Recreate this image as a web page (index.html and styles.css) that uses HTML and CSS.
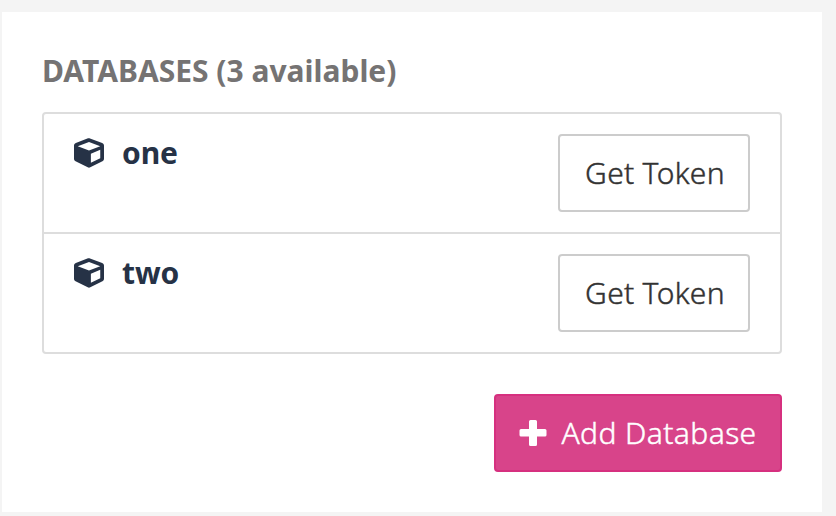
FILE: index.html
```html
<!DOCTYPE html>
<html lang="en">
<head>
<meta charset="utf-8">
<title>Databases</title>
<link rel="stylesheet" href="styles.css">
</head>
<body>
<main class="panel">
  <h2 class="title">DATABASES (3 available)</h2>
  <ul class="list">
    <li class="row">
      <svg class="cube" viewBox="0 0 512 512"><path d="M239.1 6.300l-208 78c-18.700 7-31.100 25-31.100 45v225.100c0 18.200 10.300 34.800 26.500 42.900l208 104c13.500 6.800 29.400 6.800 42.900 0l208-104c16.300-8.100 26.500-24.800 26.500-42.900V129.300c0-20-12.400-37.900-31.100-44.900l-208-78C262 2.200 250 2.200 239.100 6.300zM256 68.400l192 72v1.100l-192 70-192-70v-1.100l192-72zm32 356V267l160-65v142.400l-160 80z"/></svg>
      <span class="name">one</span>
      <button class="btn">Get Token</button>
    </li>
    <li class="row">
      <svg class="cube" viewBox="0 0 512 512"><path d="M239.1 6.300l-208 78c-18.700 7-31.100 25-31.100 45v225.100c0 18.200 10.300 34.800 26.500 42.900l208 104c13.500 6.800 29.400 6.800 42.900 0l208-104c16.300-8.100 26.500-24.800 26.500-42.900V129.300c0-20-12.400-37.900-31.100-44.900l-208-78C262 2.200 250 2.200 239.100 6.300zM256 68.400l192 72v1.100l-192 70-192-70v-1.100l192-72zm32 356V267l160-65v142.400l-160 80z"/></svg>
      <span class="name">two</span>
      <button class="btn">Get Token</button>
    </li>
  </ul>
  <button class="btn add">
    <svg class="plus" viewBox="0 0 28 28"><path d="M11.500 1h5q1.500 0 1.500 1.500V10h8q1.500 0 1.500 1.500v4.500q0 1.500-1.500 1.500h-8v8q0 1.500-1.500 1.500h-5q-1.500 0-1.500-1.500v-8H2Q.5 17.500.5 16v-4.500q0-1.500 1.500-1.500h8V2.500Q10 1 11.500 1z"/></svg>
    <span>Add Database</span>
  </button>
</main>
</body>
</html>
```
FILE: styles.css
```css
* { box-sizing: border-box; }
body {
  margin: 0;
  height: 516px;
  padding: 12px 14px 4px 2px;
  background: #f4f4f4;
  font-family: "Noto Sans", sans-serif;
  overflow: hidden;
}
.panel {
  display: flex;
  flex-direction: column;
  height: 500px;
  padding: 39px 40px 40px;
  background: #fff;
}
.title {
  margin: 0 0 21px;
  font-size: 30px;
  line-height: 40px;
  font-weight: 700;
  color: #757373;
  white-space: nowrap;
}
.list {
  margin: 0 0 40px;
  padding: 0;
  list-style: none;
  border: 2px solid #ddd;
  border-radius: 4px;
}
.row {
  display: flex;
  align-items: flex-start;
  height: 118px;
  padding: 20px 30px;
}
.row + .row {
  height: 120px;
  border-top: 2px solid #ddd;
}
.cube {
  width: 30px;
  height: 30px;
  margin-top: 4px;
  fill: #263246;
}
.name {
  margin-left: 18px;
  font-size: 30px;
  line-height: 38px;
  font-weight: 700;
  letter-spacing: -0.1px;
  color: #263246;
}
.btn {
  height: 78px;
  width: 192px;
  margin: 0 0 0 auto;
  padding: 0 0 0 2px;
  border: 2px solid #ccc;
  border-radius: 4px;
  background: #fff;
  color: #333;
  font: 300 30px/40px "Noto Sans", sans-serif;
  letter-spacing: 0.3px;
  -webkit-text-stroke: 0.45px currentColor;
  white-space: nowrap;
}
.add {
  display: flex;
  align-items: center;
  justify-content: center;
  width: 288px;
  padding: 0;
  border-color: #d6307f;
  background: #d8448a;
  color: #fff;
  letter-spacing: 0.4px;
}
.plus {
  width: 28px;
  height: 28px;
  margin-right: 14px;
  fill: #fff;
}
```
